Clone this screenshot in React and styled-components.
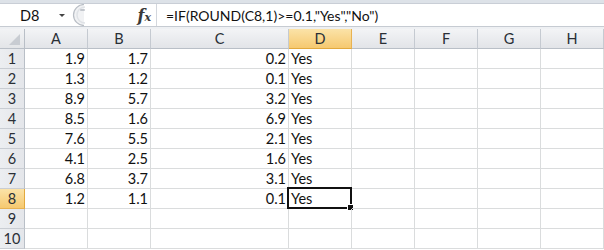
import React from "react";
import styled, { createGlobalStyle } from "styled-components";

const Global = createGlobalStyle`
  html, body { margin: 0; padding: 0; background: #fff; }
  body { font-family: "Lato", "Open Sans", sans-serif; }
`;

const Page = styled.div`
  width: 604px;
  height: 250px;
  overflow: hidden;
  background: #fff;
  display: flex;
  flex-direction: column;
`;

const TopStrip = styled.div`
  height: 3px;
  background: #dde2e8;
  border-bottom: 1px solid #c9ced6;
`;

const FormulaBar = styled.div`
  height: 22px;
  display: flex;
  align-items: stretch;
  background: #fff;
  border-bottom: 1px solid #c6cbd2;
`;

const NameBox = styled.div`
  width: 70px;
  display: flex;
  align-items: center;
  font-size: 14.5px;
  color: #111;
  position: relative;
  padding-left: 20px;
  box-sizing: border-box;
`;

const DropArrow = styled.div`
  position: absolute;
  right: 5px;
  top: 10px;
  width: 0;
  height: 0;
  border-left: 3px solid transparent;
  border-right: 3px solid transparent;
  border-top: 3px solid #444;
`;

const Grip = styled.div`
  width: 20px;
  display: flex;
  align-items: center;
`;

const FxArea = styled.div`
  width: 67px;
  display: flex;
  align-items: center;
  justify-content: flex-end;
  padding-right: 5px;
  box-sizing: border-box;
  font-family: "DejaVu Serif", "Liberation Serif", serif;
  font-style: italic;
  font-weight: bold;
  font-size: 16px;
  color: #3a3a3a;
  border-right: 1px solid #d3d7dd;
`;

const Sub = styled.span`
  font-size: 11px;
  margin-left: 0px;
  position: relative;
  top: 2px;
`;

const FormulaText = styled.div`
  flex: 1;
  display: flex;
  align-items: center;
  padding-left: 9px;
  font-size: 14px;
  color: #111;
  white-space: nowrap;
`;

const Spacer = styled.div`
  height: 2px;
  background: #eef0f3;
`;

const Grid = styled.div`
  display: grid;
  grid-template-columns: 25px 63px 63px 138px 63px 63px 63px 63px 63px;
  grid-auto-rows: 20px;
`;

const Corner = styled.div`
  background: linear-gradient(#f2f3f5, #e3e5e8);
  border-right: 1px solid #b9bfc7;
  border-bottom: 1px solid #b9bfc7;
  box-sizing: border-box;
  position: relative;
`;

const ColHead = styled.div`
  background: ${(p) =>
    p.$active
      ? "linear-gradient(#fbe3a8, #f6c970)"
      : "linear-gradient(#f3f4f6, #e2e4e8)"};
  border-right: 1px solid ${(p) => (p.$active ? "#e8b252" : "#c5cad1")};
  border-bottom: 1px solid ${(p) => (p.$active ? "#e2a93d" : "#b9bfc7")};
  box-sizing: border-box;
  display: flex;
  align-items: center;
  justify-content: center;
  font-size: 14.5px;
  color: #2a2f36;
`;

const RowHead = styled.div`
  background: ${(p) =>
    p.$active
      ? "linear-gradient(#fbe3a8, #f6c970)"
      : "linear-gradient(90deg, #eceef1, #e4e6ea)"};
  border-right: 1px solid ${(p) => (p.$active ? "#e2a93d" : "#b9bfc7")};
  border-bottom: 1px solid ${(p) => (p.$active ? "#e8b252" : "#c9cdd3")};
  box-sizing: border-box;
  display: flex;
  align-items: center;
  justify-content: center;
  font-size: 14.5px;
  color: #2a2f36;
`;

const Cell = styled.div`
  border-right: 1px solid #dadcdd;
  border-bottom: 1px solid #dadcdd;
  box-sizing: border-box;
  display: flex;
  align-items: center;
  justify-content: ${(p) => (p.$num ? "flex-end" : "flex-start")};
  padding: 0 2px 0 2px;
  font-size: 14.5px;
  color: #111;
  white-space: nowrap;
  position: relative;
`;

const Selection = styled.div`
  position: absolute;
  left: -2px;
  top: -2px;
  right: -1px;
  bottom: -1px;
  border: 2px solid #111;
  pointer-events: none;
`;

const Handle = styled.div`
  position: absolute;
  right: -4px;
  bottom: -4px;
  width: 5px;
  height: 5px;
  background: #111;
  border: 1px solid #fff;
`;

const cols = ["A", "B", "C", "D", "E", "F", "G", "H"];
const data = [
  [1.9, 1.7, 0.2],
  [1.3, 1.2, 0.1],
  [8.9, 5.7, 3.2],
  [8.5, 1.6, 6.9],
  [7.6, 5.5, 2.1],
  [4.1, 2.5, 1.6],
  [6.8, 3.7, 3.1],
  [1.2, 1.1, 0.1],
];

export default function App() {
  return (
    <Page>
      <Global />
      <TopStrip />
      <FormulaBar>
        <NameBox>
          D8
          <DropArrow />
        </NameBox>
        <Grip>
          <svg width="18" height="22" viewBox="0 0 18 22">
            <path d="M14 0.5 A10.5 10.5 0 0 0 14 21.5" fill="#f1f2f4" stroke="#b9bec5" strokeWidth="1.2" />
            <path d="M15 3 A8 8 0 0 0 15 19" fill="none" stroke="#dfe2e6" strokeWidth="1.5" />
            <rect x="10" y="5" width="5" height="2" rx="1" fill="#c2c6cc" />
          </svg>
        </Grip>
        <FxArea>
          f<Sub>x</Sub>
        </FxArea>
        <FormulaText>=IF(ROUND(C8,1)&gt;=0.1,"Yes","No")</FormulaText>
      </FormulaBar>
      <Spacer />
      <Grid>
        <Corner>
          <svg width="24" height="19" style={{ position: "absolute", left: 0, top: 0 }}>
            <polygon points="20,5 20,16 9,16" fill="#c8ccd2" />
          </svg>
        </Corner>
        {cols.map((c) => (
          <ColHead key={c} $active={c === "D"}>
            {c}
          </ColHead>
        ))}
        {Array.from({ length: 10 }).map((_, r) => {
          const row = data[r];
          return (
            <React.Fragment key={r}>
              <RowHead $active={r === 7}>{r + 1}</RowHead>
              <Cell $num>{row ? row[0].toFixed(1) : ""}</Cell>
              <Cell $num>{row ? row[1].toFixed(1) : ""}</Cell>
              <Cell $num>{row ? row[2].toFixed(1) : ""}</Cell>
              <Cell>
                {row ? "Yes" : ""}
                {r === 7 && (
                  <Selection>
                    <Handle />
                  </Selection>
                )}
              </Cell>
              <Cell />
              <Cell />
              <Cell />
              <Cell />
            </React.Fragment>
          );
        })}
      </Grid>
    </Page>
  );
}
